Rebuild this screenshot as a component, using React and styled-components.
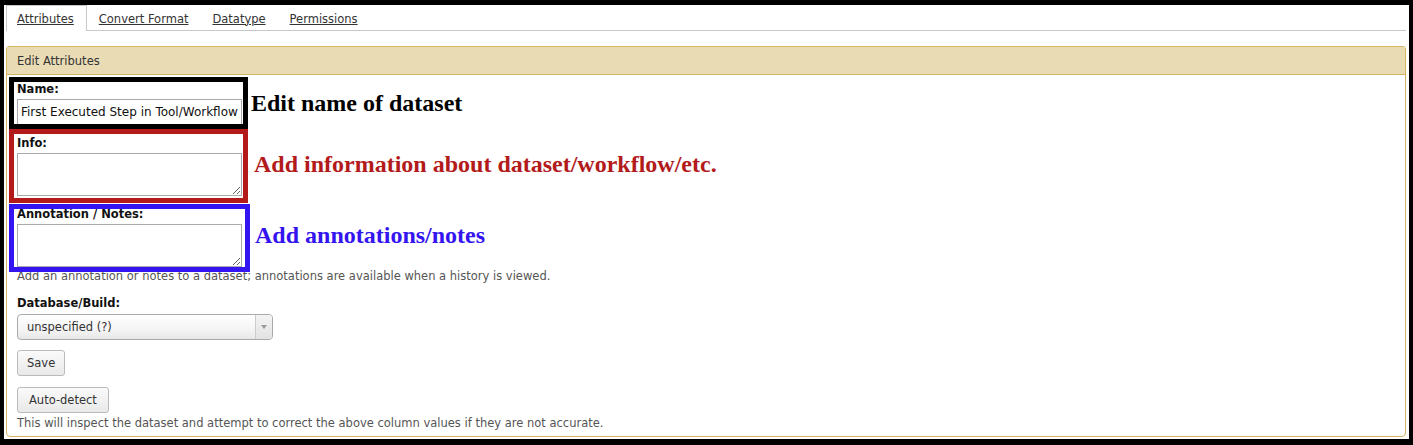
import React from "react";
import styled, { createGlobalStyle } from "styled-components";

const Global = createGlobalStyle`
  html, body { margin: 0; padding: 0; background: #000; }
  body { font-family: "DejaVu Sans", "Liberation Sans", sans-serif; font-size: 11.5px; color: #333; }
  * { box-sizing: border-box; }
`;

const Page = styled.div`
  margin: 5px 4px 6px 4px;
  height: 434px;
  background: #fff;
  padding: 0 3px 0 2px;
  display: flex;
  flex-direction: column;
`;

const Tabs = styled.ul`
  list-style: none;
  margin: 0;
  padding: 0;
  display: flex;
  height: 26px;
  border-bottom: 1px solid #c8c8c8;
`;

const Tab = styled.li`
  padding: 0 12px 0 10px;
  display: flex;
  align-items: center;
  border: 1px solid ${(p) => (p.$active ? "#c8c8c8" : "transparent")};
  border-bottom: none;
  background: #fff;
  margin-bottom: ${(p) => (p.$active ? "-1px" : "0")};
  height: ${(p) => (p.$active ? "26px" : "25px")};
  margin-right: ${(p) => (p.$active ? "1px" : "0")};
`;

const TabLink = styled.a`
  color: #333;
  text-decoration: underline;
  font-size: 11.5px;
  line-height: 14px;
  padding-top: 1px;
`;

const Panel = styled.section`
  margin-top: 15px;
  flex: 0 0 391px;
  display: flex;
  flex-direction: column;
  border: 1px solid #d6b560;
  border-radius: 3px 3px 4px 4px;
  background: #fff;
`;

const PanelHeader = styled.div`
  height: 28px;
  background: #e9dcb5;
  border-bottom: 1px solid #d6b560;
  padding: 0 10px;
  display: flex;
  align-items: center;
  color: #333;
  font-size: 11.5px;
`;

const PanelBody = styled.div`
  position: relative;
  flex: 1;
  padding: 6px 10px 0 10px;
  display: flex;
  flex-direction: column;
`;

const Row = styled.div`
  display: flex;
  flex-direction: column;
  align-items: flex-start;
  margin-top: ${(p) => p.$top || 0}px;
`;

const Label = styled.label`
  font-weight: bold;
  font-size: 11.5px;
  line-height: 16px;
  color: #111;
  margin-bottom: ${(p) => (p.$gap != null ? p.$gap : 2)}px;
`;

const TextInput = styled.input`
  width: 225px;
  height: 26px;
  border: 1px solid #aaa;
  padding: 0 3px;
  font-family: inherit;
  font-size: 12px;
  color: #111;
  background: #fff;
  outline: none;
`;

const TextArea = styled.textarea`
  width: 225px;
  height: 43px;
  border: 1px solid #aaa;
  font-family: inherit;
  font-size: 11.5px;
  margin: 0;
  display: block;
  background: #fff;
`;

const Help = styled.div`
  font-size: 11.5px;
  line-height: 16px;
  color: #555;
  margin-top: ${(p) => p.$top || 0}px;
`;

const Select = styled.div`
  width: 256px;
  height: 26px;
  border: 1px solid #aaa;
  border-radius: 4px;
  background: linear-gradient(#fff 0%, #f4f4f4 60%, #e8e8e8 100%);
  display: flex;
  align-items: stretch;
  overflow: hidden;
`;

const SelectText = styled.span`
  flex: 1;
  display: flex;
  align-items: center;
  padding-left: 9px;
  color: #333;
  font-size: 11.5px;
`;

const SelectArrow = styled.span`
  width: 17px;
  border-left: 1px solid #ccc;
  display: flex;
  align-items: center;
  justify-content: center;
  background: linear-gradient(#f4f4f4, #e2e2e2);
  &::after {
    content: "";
    border-left: 3px solid transparent;
    border-right: 3px solid transparent;
    border-top: 4px solid #999;
  }
`;

const Button = styled.button`
  height: 26px;
  padding: 0 ${(p) => p.$pad || 10}px;
  border: 1px solid #bbb;
  border-radius: 3px;
  background: linear-gradient(#fafafa, #e9e9e9);
  font-family: inherit;
  font-size: 11.5px;
  color: #333;
  margin-top: ${(p) => p.$top || 0}px;
  cursor: pointer;
`;

const Callout = styled.div`
  position: absolute;
  left: ${(p) => p.$x}px;
  top: ${(p) => p.$y}px;
  display: flex;
  align-items: center;
  gap: ${(p) => p.$gap}px;
  pointer-events: none;
`;

const CalloutBox = styled.div`
  width: ${(p) => p.$w}px;
  height: ${(p) => p.$h}px;
  border: 5px solid ${(p) => p.$color};
`;

const CalloutText = styled.span`
  font-family: "Liberation Serif", "Times New Roman", serif;
  font-weight: bold;
  font-size: 24px;
  color: ${(p) => p.$color};
  white-space: nowrap;
  margin-bottom: ${(p) => p.$lift || 0}px;
`;

export default function App() {
  return (
    <>
      <Global />
      <Page>
        <Tabs>
          <Tab $active>
            <TabLink>Attributes</TabLink>
          </Tab>
          <Tab>
            <TabLink>Convert Format</TabLink>
          </Tab>
          <Tab>
            <TabLink>Datatype</TabLink>
          </Tab>
          <Tab>
            <TabLink>Permissions</TabLink>
          </Tab>
        </Tabs>
        <Panel>
          <PanelHeader>Edit Attributes</PanelHeader>
          <PanelBody>
            <Row>
              <Label>Name:</Label>
              <TextInput defaultValue="First Executed Step in Tool/Workflow" />
            </Row>
            <Row $top={10}>
              <Label>Info:</Label>
              <TextArea />
            </Row>
            <Row $top={10}>
              <Label>Annotation / Notes:</Label>
              <TextArea />
              <Help $top={1}>
                Add an annotation or notes to a dataset; annotations are available when a history is viewed.
              </Help>
            </Row>
            <Row $top={11}>
              <Label $gap={3}>Database/Build:</Label>
              <Select>
                <SelectText>unspecified (?)</SelectText>
                <SelectArrow />
              </Select>
            </Row>
            <Row>
              <Button $top={10} $pad={9}>Save</Button>
              <Button $top={11} $pad={11}>Auto-detect</Button>
              <Help $top={2}>
                This will inspect the dataset and attempt to correct the above column values if they are not accurate.
              </Help>
            </Row>

            <Callout $x={2} $y={2} $gap={3}>
              <CalloutBox $w={239} $h={52} $color="#000" />
              <CalloutText $color="#000">Edit name of dataset</CalloutText>
            </Callout>
            <Callout $x={2} $y={54} $gap={6}>
              <CalloutBox $w={239} $h={74} $color="#b31b1b" />
              <CalloutText $color="#b31b1b" $lift={3}>
                Add information about dataset/workflow/etc.
              </CalloutText>
            </Callout>
            <Callout $x={2} $y={129} $gap={5}>
              <CalloutBox $w={241} $h={68} $color="#3414f0" />
              <CalloutText $color="#3414f0" $lift={5}>
                Add annotations/notes
              </CalloutText>
            </Callout>
          </PanelBody>
        </Panel>
      </Page>
    </>
  );
}
